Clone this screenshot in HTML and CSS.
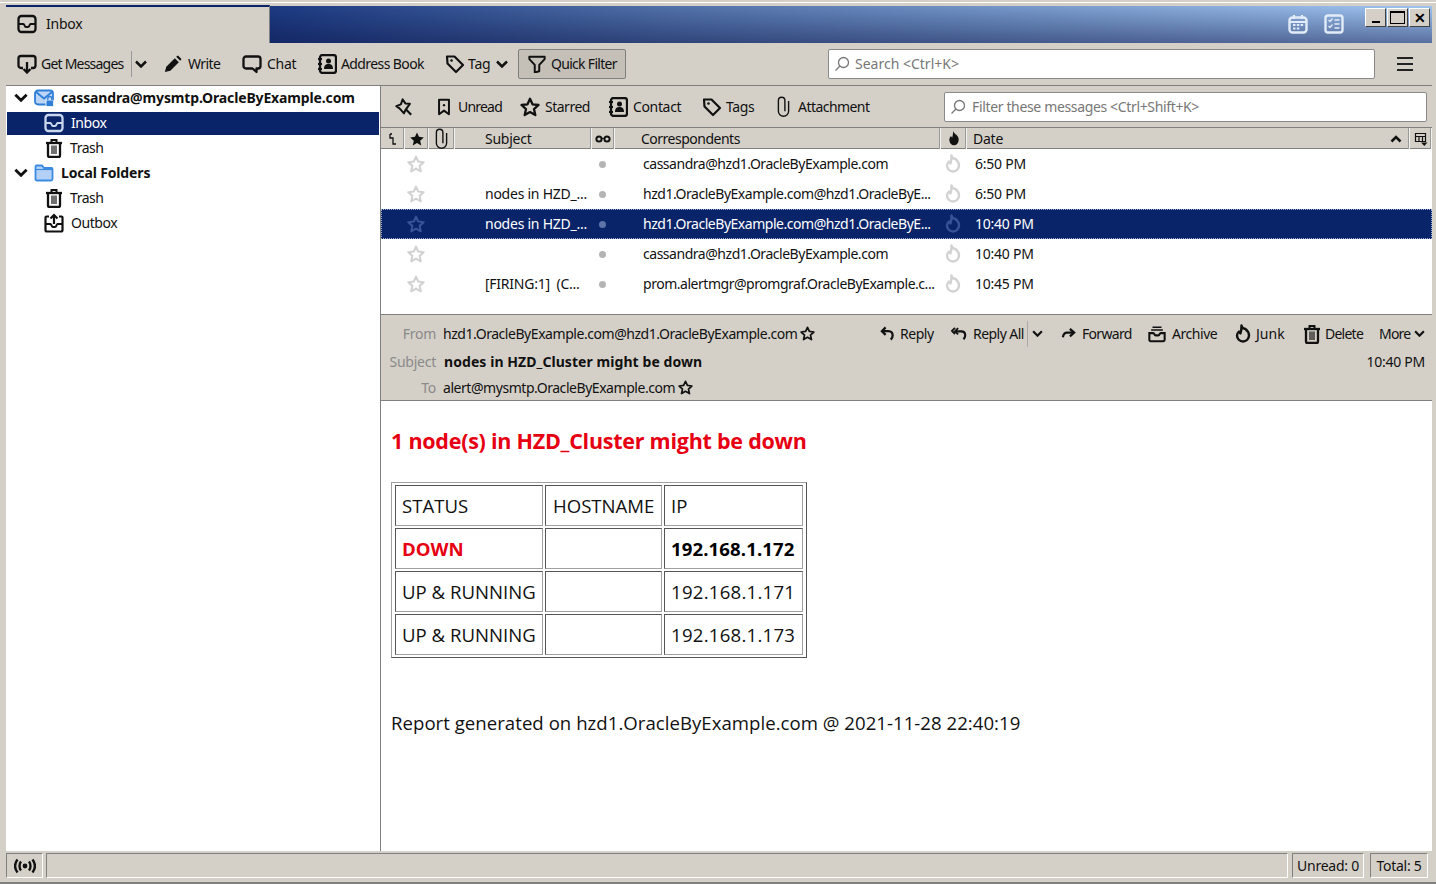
FILE: index.html
```html
<!DOCTYPE html>
<html lang="en">
<head>
<meta charset="utf-8">
<title>Inbox</title>
<link rel="stylesheet" href="styles.css">
</head>
<body>
<svg class="sprite" width="0" height="0" aria-hidden="true">
  <defs>
    <symbol id="i-inbox" viewBox="0 0 20 20"><rect x="1.500" y="2" width="17" height="16" rx="3" fill="none" stroke="currentColor" stroke-width="2.300"/><path d="M2 10h4.500c1 0 1 3 2.500 3h2c1.500 0 1.500-3 2.500-3H18" fill="none" stroke="currentColor" stroke-width="2"/></symbol>
    <symbol id="i-getmsg" viewBox="0 0 20 20"><path d="M6 14H4a2.500 2.500 0 0 1-2.500-2.500v-7A2.500 2.500 0 0 1 4 2h12a2.500 2.500 0 0 1 2.500 2.500v7A2.500 2.500 0 0 1 16 14h-2" fill="none" stroke="currentColor" stroke-width="2.300"/><path d="M10 8v10M6.500 15l3.500 3.500 3.500-3.500" fill="none" stroke="currentColor" stroke-width="2.300"/></symbol>
    <symbol id="i-chev" viewBox="0 0 12 8"><path d="M1 1.500l5 5 5-5" fill="none" stroke="currentColor" stroke-width="2.500"/></symbol>
    <symbol id="i-chevup" viewBox="0 0 12 8"><path d="M1.500 6.500L6 2l4.500 4.500" fill="none" stroke="currentColor" stroke-width="2.500"/></symbol>
    <symbol id="i-pencil" viewBox="0 0 20 20"><path d="M1 19l1.500-6L12 3.500 16.500 8 7 17.500zM13.500 2l2-1.500L19.500 4.500 18 6.500z" fill="currentColor"/></symbol>
    <symbol id="i-chat" viewBox="0 0 20 20"><path d="M4 2.500h12A2.500 2.500 0 0 1 18.500 5v7a2.500 2.500 0 0 1-2.500 2.500h-1.500V18l-4-3.500H4A2.500 2.500 0 0 1 1.500 12V5A2.500 2.500 0 0 1 4 2.500z" fill="none" stroke="currentColor" stroke-width="2.300" stroke-linejoin="round"/></symbol>
    <symbol id="i-book" viewBox="0 0 20 20"><rect x="3" y="1" width="16" height="18" rx="2.500" fill="none" stroke="currentColor" stroke-width="2.300"/><path d="M1 5h4M1 10h4M1 15h4" stroke="currentColor" stroke-width="2"/><circle cx="11.500" cy="7" r="2.500" fill="currentColor"/><path d="M7 15c0-4 2-5 4.500-5s4.500 1 4.500 5z" fill="currentColor"/></symbol>
    <symbol id="i-tag" viewBox="0 0 20 20"><path d="M2 2.500h7.500L18 11l-7 7-8.500-8.500z" fill="none" stroke="currentColor" stroke-width="2.200" stroke-linejoin="round"/><circle cx="6.500" cy="6.500" r="1.300" fill="currentColor"/></symbol>
    <symbol id="i-funnel" viewBox="0 0 20 20"><path d="M1.500 2h17v2.500L12.500 11v7l-5 1.500V11L1.500 4.500z" fill="none" stroke="currentColor" stroke-width="2.200" stroke-linejoin="round"/></symbol>
    <symbol id="i-search" viewBox="0 0 16 16"><circle cx="9.500" cy="6.500" r="5" fill="none" stroke="currentColor" stroke-width="1.300"/><path d="M6 10l-4.500 4.500" stroke="currentColor" stroke-width="1.300"/></symbol>
    <symbol id="i-calendar" viewBox="0 0 20 20"><rect x="1.500" y="3.500" width="17" height="15" rx="3" fill="none" stroke="currentColor" stroke-width="2.400"/><path d="M6 1v4M14 1v4M2 8h16" stroke="currentColor" stroke-width="2.200"/><path d="M5 10h2.500v2H5zM8.800 10h2.500v2H8.800zM12.600 10h2.500v2h-2.500zM5 13.500h2.500v2H5zM8.800 13.500h2.500v2H8.800z" fill="currentColor"/></symbol>
    <symbol id="i-tasks" viewBox="0 0 20 20"><rect x="1.500" y="1.500" width="17" height="17" rx="2.500" fill="none" stroke="currentColor" stroke-width="2.400"/><path d="M4.500 6l1.500 1.500L8.500 4.500M4.500 12l1.500 1.500L8.500 10.500" fill="none" stroke="currentColor" stroke-width="1.300"/><path d="M10.500 6h5M10.500 10h5M10.500 14h5" stroke="currentColor" stroke-width="1.300"/></symbol>
    <symbol id="i-pin" viewBox="0 0 20 20"><path d="M8.500 1.500l3 4.500 5 .5-5 7-1.500 3.500L5 11.500 1.500 9l5-2z" fill="none" stroke="currentColor" stroke-width="2.200" stroke-linejoin="round"/><path d="M12 12.500l6 6" stroke="currentColor" stroke-width="2.400"/></symbol>
    <symbol id="i-bookmark" viewBox="0 0 16 20"><path d="M2.500 2h11v16L8 14l-5.500 4z" fill="none" stroke="currentColor" stroke-width="2.200" stroke-linejoin="round"/><circle cx="8" cy="8" r="1.300" fill="currentColor"/></symbol>
    <symbol id="i-star" viewBox="0 0 20 20"><path d="M10 1.800l2.500 5.500 6 .7-4.500 4.100 1.300 6L10 15.100l-5.300 3 1.300-6L1.500 8l6-.7z" fill="none" stroke="currentColor" stroke-width="2.300" stroke-linejoin="round"/></symbol>
    <symbol id="i-starfill" viewBox="0 0 20 20"><path d="M10 1.800l2.500 5.500 6 .7-4.500 4.100 1.300 6L10 15.100l-5.300 3 1.300-6L1.500 8l6-.7z" fill="currentColor"/></symbol>
    <symbol id="i-clip" viewBox="0 0 14 22"><path d="M12.500 5v11a5.500 5.500 0 0 1-11 0V4.500a3.500 3.500 0 0 1 7 0V16" fill="none" stroke="currentColor" stroke-width="1.500"/></symbol>
    <symbol id="i-thread" viewBox="0 0 10 12"><path d="M2 1v4h3v6h3M2 1l2 0" fill="none" stroke="currentColor" stroke-width="1.300"/></symbol>
    <symbol id="i-glasses" viewBox="0 0 16 8"><circle cx="4" cy="4" r="2.600" fill="none" stroke="currentColor" stroke-width="2"/><circle cx="12" cy="4" r="2.600" fill="none" stroke="currentColor" stroke-width="2"/><path d="M6 3.500h4" stroke="currentColor"/></symbol>
    <symbol id="i-flame" viewBox="0 0 16 20"><path d="M6.500 1.500c1 3.500 2.500 3 4 3.500 2.500 2 3.500 4 3.500 6.500a6 6 0 0 1-12 0C2 9.500 3 8.500 4 7.500c.5 1 1 1.500 1.500 2 .8-2.500 1-5 1-8z" fill="none" stroke="currentColor" stroke-width="2.400" stroke-linejoin="round"/></symbol>
    <symbol id="i-flamefill" viewBox="0 0 16 20"><path d="M7 1c.5 3 2.500 3.500 4 5 1.500 1.500 2.500 3 2.500 5.500a5.500 6.500 0 0 1-11 0C2.500 9.500 3.500 8 4.500 7c.5 1 .8 1.500 1.300 2C6.500 7 7 4 7 1z" fill="currentColor"/></symbol>
    <symbol id="i-picker" viewBox="0 0 14 14"><path d="M1.500 1.500h10v8h-10zM1.500 4.500h10M5 4.500v5M8.500 4.500v5" fill="none" stroke="currentColor" stroke-width="1.200"/><path d="M7 10.500h6.500L10.300 14z" fill="currentColor"/></symbol>
    <symbol id="i-maillock" viewBox="0 0 20 20"><rect x="1" y="2.500" width="18" height="14" rx="3" fill="#bcd4f5" stroke="#2f7fd8" stroke-width="1.800"/><path d="M2 4l8 6.500L18 4" fill="none" stroke="#2f7fd8" stroke-width="1.800"/><rect x="12" y="12" width="7.500" height="6.500" rx="1" fill="#2f7fd8" stroke="#fff" stroke-width=".8"/><path d="M13.800 12v-1.500a2 2 0 0 1 4 0V12" fill="none" stroke="#2f7fd8" stroke-width="1.300"/></symbol>
    <symbol id="i-folder" viewBox="0 0 20 20"><path d="M1.500 16V3.500A1 1 0 0 1 2.500 2.500H8l2 2.500h7.500a1 1 0 0 1 1 1V16a1.500 1.500 0 0 1-1.500 1.500H3A1.500 1.500 0 0 1 1.500 16z" fill="#b5d0f7" stroke="#3a8be0" stroke-width="1.800"/><path d="M2 6.500h16" stroke="#3a8be0" stroke-width="1.200"/></symbol>
    <symbol id="i-trash" viewBox="0 0 18 20"><path d="M1 5h16" stroke="currentColor" stroke-width="2.300"/><path d="M6.500 5V2h5V5" fill="none" stroke="currentColor" stroke-width="2"/><path d="M3 5v12.500A1.500 1.500 0 0 0 4.500 19h9a1.500 1.500 0 0 0 1.500-1.500V5" fill="none" stroke="currentColor" stroke-width="2.300"/><path d="M7 7.500v8.500M9 7.500v8.500M11 7.500v8.500" stroke="currentColor" stroke-width="1.200"/></symbol>
    <symbol id="i-outbox" viewBox="0 0 20 20"><path d="M5 3.500H2.500a1 1 0 0 0-1 1V17a1.500 1.500 0 0 0 1.500 1.500h14a1.500 1.500 0 0 0 1.500-1.500V4.500a1 1 0 0 0-1-1H15" fill="none" stroke="currentColor" stroke-width="2.200"/><path d="M2 11h4.500c1 0 1 3 2.500 3h2c1.500 0 1.500-3 2.500-3H18" fill="none" stroke="currentColor" stroke-width="2"/><path d="M10 11V2M6.500 5.500L10 2l3.500 3.500" fill="none" stroke="currentColor" stroke-width="2.200"/></symbol>
    <symbol id="i-reply" viewBox="0 0 16 16"><path d="M6 1.500L2 5.500l4 4" fill="none" stroke="currentColor" stroke-width="2.400"/><path d="M2.500 5.500H9c3 0 4.500 2 4.500 4.500s-1 3.500-2 4.500" fill="none" stroke="currentColor" stroke-width="2.400"/></symbol>
    <symbol id="i-replyall" viewBox="0 0 18 16"><path d="M4.500 1L1 4.500 4.500 8M8 1.500L4.500 5 8 8.500" fill="none" stroke="currentColor" stroke-width="2"/><path d="M5 5h6.500c3 0 4.500 2 4.500 4.500s-1 3.500-2 4.500" fill="none" stroke="currentColor" stroke-width="2.400"/></symbol>
    <symbol id="i-forward" viewBox="0 0 16 12"><path d="M9.500 1l4.500 4-4.500 4" fill="none" stroke="currentColor" stroke-width="2.400"/><path d="M13.500 5H6.500c-2.500 0-4 1.500-4.500 5" fill="none" stroke="currentColor" stroke-width="2.400"/></symbol>
    <symbol id="i-archive" viewBox="0 0 20 20"><path d="M5 2.500h10M3.500 5.500h13" stroke="currentColor" stroke-width="1.600"/><path d="M1.500 9h4.500c1 0 1 2.500 2.500 2.500h3c1.500 0 1.500-2.500 2.500-2.500h4.500v7.500a1.500 1.500 0 0 1-1.500 1.500H3a1.500 1.500 0 0 1-1.500-1.500z" fill="none" stroke="currentColor" stroke-width="2.300"/></symbol>
    <symbol id="i-radio" viewBox="0 0 22 16"><circle cx="11" cy="8" r="2.400" fill="currentColor"/><path d="M7 3.500c-2 2.500-2 6.500 0 9M15 3.500c2 2.500 2 6.500 0 9M3.500 1.500c-3 4-3 9 0 13M18.500 1.500c3 4 3 9 0 13" fill="none" stroke="currentColor" stroke-width="2.400"/></symbol>
  </defs>
</svg>

<div class="window">
  <header class="titlebar">
    <div class="tab"><svg class="ic ic-20"><use href="#i-inbox"/></svg><span>Inbox</span></div>
    <div class="title-tools">
      <svg class="ic ic-20"><use href="#i-calendar"/></svg>
      <svg class="ic ic-20"><use href="#i-tasks"/></svg>
    </div>
    <div class="wincontrols">
      <button class="winbtn"><span class="glyph-min"></span></button>
      <button class="winbtn"><span class="glyph-max"></span></button>
      <button class="winbtn winbtn-close"><span class="glyph-close">✕</span></button>
    </div>
  </header>

  <nav class="toolbar">
    <div class="tb w-getmsg"><svg class="ic ic-20"><use href="#i-getmsg"/></svg><span>Get Messages</span></div>
    <div class="tb w-drop"><svg class="ic chev"><use href="#i-chev"/></svg></div>
    <div class="tb w-write"><svg class="ic ic-18"><use href="#i-pencil"/></svg><span>Write</span></div>
    <div class="tb w-chat"><svg class="ic ic-20"><use href="#i-chat"/></svg><span>Chat</span></div>
    <div class="tb w-book"><svg class="ic ic-20"><use href="#i-book"/></svg><span>Address Book</span></div>
    <div class="tb w-tag"><svg class="ic ic-20"><use href="#i-tag"/></svg><span>Tag</span><svg class="ic chev tag-chev"><use href="#i-chev"/></svg></div>
    <div class="tb w-quick"><svg class="ic ic-18"><use href="#i-funnel"/></svg><span>Quick Filter</span></div>
    <div class="searchbox w-search"><svg class="ic ic-16"><use href="#i-search"/></svg><span>Search &lt;Ctrl+K&gt;</span></div>
    <div class="hamburger"><i></i><i></i><i></i></div>
  </nav>

  <main class="panes">
    <aside class="folders">
      <div class="folder account"><svg class="ic chev chev-lg"><use href="#i-chev"/></svg><svg class="ic ic-20"><use href="#i-maillock"/></svg><span>cassandra@mysmtp.OracleByExample.com</span></div>
      <div class="folder child selected"><svg class="ic ic-20"><use href="#i-inbox"/></svg><span>Inbox</span></div>
      <div class="folder child"><svg class="ic ic-trash"><use href="#i-trash"/></svg><span>Trash</span></div>
      <div class="folder account"><svg class="ic chev chev-lg"><use href="#i-chev"/></svg><svg class="ic ic-20"><use href="#i-folder"/></svg><span>Local Folders</span></div>
      <div class="folder child"><svg class="ic ic-trash"><use href="#i-trash"/></svg><span>Trash</span></div>
      <div class="folder child"><svg class="ic ic-20"><use href="#i-outbox"/></svg><span>Outbox</span></div>
    </aside>

    <section class="content">
      <div class="filterbar">
        <div class="fb w-pin"><svg class="ic ic-18"><use href="#i-pin"/></svg></div>
        <div class="fb w-unread"><svg class="ic ic-16b"><use href="#i-bookmark"/></svg><span>Unread</span></div>
        <div class="fb w-starred"><svg class="ic ic-20"><use href="#i-star"/></svg><span>Starred</span></div>
        <div class="fb w-contact"><svg class="ic ic-20"><use href="#i-book"/></svg><span>Contact</span></div>
        <div class="fb w-tags"><svg class="ic ic-20"><use href="#i-tag"/></svg><span>Tags</span></div>
        <div class="fb w-attach"><svg class="ic ic-clip"><use href="#i-clip"/></svg><span>Attachment</span></div>
        <div class="searchbox w-filter"><svg class="ic ic-16"><use href="#i-search"/></svg><span>Filter these messages &lt;Ctrl+Shift+K&gt;</span></div>
      </div>

      <div class="thead cols">
        <div class="th"><svg class="ic ic-thread"><use href="#i-thread"/></svg></div>
        <div class="th"><svg class="ic ic-16"><use href="#i-starfill"/></svg></div>
        <div class="th"><svg class="ic ic-clip"><use href="#i-clip"/></svg></div>
        <div class="th th-text th-subject">Subject</div>
        <div class="th"><svg class="ic ic-glasses"><use href="#i-glasses"/></svg></div>
        <div class="th th-text th-corr">Correspondents</div>
        <div class="th"><svg class="ic ic-flamehead"><use href="#i-flamefill"/></svg></div>
        <div class="th th-text th-date"><span>Date</span><svg class="ic chev"><use href="#i-chevup"/></svg></div>
        <div class="th"><svg class="ic ic-14"><use href="#i-picker"/></svg></div>
      </div>

      <div class="threads">
        <div class="row cols">
          <div></div><div class="cell-c"><svg class="ic ic-18 mute"><use href="#i-star"/></svg></div><div></div>
          <div class="subj"></div><div class="cell-c"><i class="dot"></i></div>
          <div class="corr">cassandra@hzd1.OracleByExample.com</div>
          <div class="cell-c"><svg class="ic ic-flame mute"><use href="#i-flame"/></svg></div><div class="date">6:50 PM</div><div></div>
        </div>
        <div class="row cols">
          <div></div><div class="cell-c"><svg class="ic ic-18 mute"><use href="#i-star"/></svg></div><div></div>
          <div class="subj">nodes in HZD_...</div><div class="cell-c"><i class="dot"></i></div>
          <div class="corr">hzd1.OracleByExample.com@hzd1.OracleByE...</div>
          <div class="cell-c"><svg class="ic ic-flame mute"><use href="#i-flame"/></svg></div><div class="date">6:50 PM</div><div></div>
        </div>
        <div class="row cols row-selected">
          <div></div><div class="cell-c"><svg class="ic ic-18 mute"><use href="#i-star"/></svg></div><div></div>
          <div class="subj">nodes in HZD_...</div><div class="cell-c"><i class="dot"></i></div>
          <div class="corr">hzd1.OracleByExample.com@hzd1.OracleByE...</div>
          <div class="cell-c"><svg class="ic ic-flame mute"><use href="#i-flame"/></svg></div><div class="date">10:40 PM</div><div></div>
        </div>
        <div class="row cols">
          <div></div><div class="cell-c"><svg class="ic ic-18 mute"><use href="#i-star"/></svg></div><div></div>
          <div class="subj"></div><div class="cell-c"><i class="dot"></i></div>
          <div class="corr">cassandra@hzd1.OracleByExample.com</div>
          <div class="cell-c"><svg class="ic ic-flame mute"><use href="#i-flame"/></svg></div><div class="date">10:40 PM</div><div></div>
        </div>
        <div class="row cols">
          <div></div><div class="cell-c"><svg class="ic ic-18 mute"><use href="#i-star"/></svg></div><div></div>
          <div class="subj">[FIRING:1] &nbsp;(C...</div><div class="cell-c"><i class="dot"></i></div>
          <div class="corr">prom.alertmgr@promgraf.OracleByExample.c...</div>
          <div class="cell-c"><svg class="ic ic-flame mute"><use href="#i-flame"/></svg></div><div class="date">10:45 PM</div><div></div>
        </div>
      </div>

      <div class="msghead">
        <div class="hrow hrow-from">
          <span class="hlabel">From</span>
          <span class="hval">hzd1.OracleByExample.com@hzd1.OracleByExample.com</span>
          <svg class="ic ic-15"><use href="#i-star"/></svg>
          <div class="actions">
            <div class="act w-reply"><svg class="ic ic-15"><use href="#i-reply"/></svg><span>Reply</span></div>
            <div class="act w-replyall"><svg class="ic ic-16"><use href="#i-replyall"/></svg><span>Reply All</span></div>
            <div class="act w-adrop"><svg class="ic chev chev-sm"><use href="#i-chev"/></svg></div>
            <div class="act w-forward"><svg class="ic ic-15"><use href="#i-forward"/></svg><span>Forward</span></div>
            <div class="act w-archive"><svg class="ic ic-18"><use href="#i-archive"/></svg><span>Archive</span></div>
            <div class="act w-junk"><svg class="ic ic-flame"><use href="#i-flame"/></svg><span>Junk</span></div>
            <div class="act w-delete"><svg class="ic ic-trash"><use href="#i-trash"/></svg><span>Delete</span></div>
            <div class="act w-more"><span>More</span><svg class="ic chev chev-sm"><use href="#i-chev"/></svg></div>
          </div>
        </div>
        <div class="hrow hrow-subject">
          <span class="hlabel">Subject</span>
          <strong class="hval hsubject">nodes in HZD_Cluster might be down</strong>
          <span class="htime">10:40 PM</span>
        </div>
        <div class="hrow hrow-to">
          <span class="hlabel">To</span>
          <span class="hval">alert@mysmtp.OracleByExample.com</span>
          <svg class="ic ic-15"><use href="#i-star"/></svg>
        </div>
      </div>

      <article class="body">
        <h1>1 node(s) in HZD_Cluster might be down</h1>
        <table class="report">
          <colgroup><col class="c1"><col class="c2"><col class="c3"></colgroup>
          <tr><td>STATUS</td><td class="host">HOSTNAME</td><td>IP</td></tr>
          <tr><td class="down">DOWN</td><td></td><td class="ip strong">192.168.1.172</td></tr>
          <tr><td>UP &amp; RUNNING</td><td></td><td class="ip">192.168.1.171</td></tr>
          <tr><td>UP &amp; RUNNING</td><td></td><td class="ip">192.168.1.173</td></tr>
        </table>
        <p class="generated">Report generated on hzd1.OracleByExample.com @ 2021-11-28 22:40:19</p>
      </article>
    </section>
  </main>

  <footer class="statusbar">
    <div class="sb sb-online"><svg class="ic ic-radio"><use href="#i-radio"/></svg></div>
    <div class="sb sb-grow"></div>
    <div class="sb sb-unread">Unread: 0</div>
    <div class="sb sb-total">Total: 5</div>
  </footer>
</div>
</body>
</html>
```

FILE: styles.css
```css
* { box-sizing: border-box; }
html, body { margin: 0; padding: 0; height: 100%; }
body {
  width: 1436px; height: 884px; overflow: hidden;
  background: #d4d0c8; color: #111;
  font-family: "Noto Sans", "DejaVu Sans", sans-serif;
  font-size: 14px; letter-spacing: -0.25px;
}
.sprite { position: absolute; }
.window {
  height: 884px; display: flex; flex-direction: column;
  padding: 4px 4px 0 6px;
  box-shadow: inset 0 1px 0 #fff, inset 0 -2px 0 #808080;
  border-top: 2px solid #d4d0c8;
}
.ic { display: block; flex: none; overflow: visible; }
.ic-20 { width: 20px; height: 20px; }
.ic-18 { width: 18px; height: 18px; }
.ic-16 { width: 16px; height: 16px; }
.ic-15 { width: 15px; height: 15px; }
.ic-14 { width: 14px; height: 14px; }
.ic-16b { width: 16px; height: 18px; }
.ic-clip { width: 13px; height: 21px; }
.ic-thread { width: 10px; height: 12px; }
.ic-glasses { width: 16px; height: 8px; }
.ic-flame { width: 16px; height: 20px; }
.ic-flamehead { width: 14px; height: 17px; }
.ic-radio { width: 22px; height: 16px; }
.ic-trash { width: 18px; height: 20px; }
.chev { width: 12px; height: 8px; }
.chev-lg { width: 14px; height: 9px; }

/* title bar */
.titlebar {
  height: 37px; flex: none; display: flex; align-items: flex-start;
  background:
    linear-gradient(180deg, rgba(10, 20, 70, 0) 0%, rgba(10, 20, 70, .48) 100%),
    linear-gradient(90deg, #1c3a82 18.5%, #5070a8 46%, #8aaddc 84%, #a0c4f0 100%);
}
.tab {
  width: 264px; height: 38px; margin-top: -1px; display: flex; align-items: center; gap: 9px;
  padding: 0 0 3px 11px; background: #d4d0c8; border-top: 2px solid #0a246a;
  border-right: 1px solid #808080;
}
.title-tools { margin-left: auto; display: flex; gap: 16px; padding-top: 8px; color: #e2ecf8; }
.wincontrols { display: flex; margin-left: 21px; margin-right: 2px; padding-top: 2px; gap: 1px; }
.winbtn {
  width: 21px; height: 19px; padding: 0; background: #d4d0c8; display: flex; align-items: center; justify-content: center;
  border: 1px solid; border-color: #fff #404040 #404040 #fff;
  overflow: hidden; color: #000;
}
.glyph-min { width: 8px; height: 2px; background: #000; margin-top: 9px; }
.glyph-max { width: 15px; height: 13px; border: 1px solid #000; border-top-width: 2px; }
.glyph-close { font-size: 14px; line-height: 14px; font-weight: 700; letter-spacing: 0; }

/* main toolbar */
.toolbar { height: 43px; flex: none; display: flex; align-items: center; padding: 0 0 1px 11px; border-bottom: 1px solid #808080; letter-spacing: -0.45px; }
.tb { display: flex; align-items: center; gap: 4px; height: 30px; white-space: nowrap; }
.w-getmsg { width: 115px; height: 26px; border-right: 1px solid #999; letter-spacing: -0.78px; }
.w-drop { width: 32px; padding-left: 3px; }
.w-write { width: 78px; gap: 6px; letter-spacing: -0.6px; }
.w-chat { width: 75px; gap: 5px; letter-spacing: -0.25px; }
.w-book { width: 128px; gap: 4px; letter-spacing: -0.6px; }
.w-tag { width: 73px; gap: 3px; letter-spacing: -0.25px; }
.tag-chev { margin-left: 3px; }
.w-quick { width: 108px; padding-left: 9px; gap: 5px; background: #c4c0b8; border: 1px solid #808080; border-radius: 2px; letter-spacing: -0.7px; }
.searchbox {
  display: flex; align-items: center; gap: 6px; height: 30px; background: #fff; color: #777;
  border: 1px solid #8a8a8a; border-radius: 2px; padding-left: 5px; white-space: nowrap;
}
.w-search { width: 547px; margin-left: 202px; letter-spacing: 0; gap: 5px; }
.hamburger { margin-left: 22px; width: 16px; display: flex; flex-direction: column; gap: 4px; }
.hamburger i { display: block; height: 2px; background: #222; }

/* panes */
.panes { flex: 1; min-height: 0; display: flex; }
.folders { width: 375px; flex: none; background: #fff; border-right: 1px solid #808080; letter-spacing: -0.45px; }
.folder { height: 25px; display: flex; align-items: center; white-space: nowrap; padding-bottom: 2px; }
.account { font-weight: 700; padding-left: 8px; gap: 6px; letter-spacing: -0.14px; }
.account span { margin-left: 1px; }
.child { padding-left: 38px; gap: 7px; }
.child .ic-trash { margin-left: 1px; }
.folder.selected { background: #0a246a; color: #fff; height: 23px; margin: 1px; padding-left: 37px; padding-bottom: 2px; }
.selected .ic { color: #c9d6ee; }
.content { flex: 1; min-width: 0; display: flex; flex-direction: column; }

/* quick filter bar */
.filterbar { height: 41px; flex: none; display: flex; align-items: center; padding-left: 14px; letter-spacing: -0.35px; }
.fb { display: flex; align-items: center; gap: 6px; white-space: nowrap; }
.w-pin { width: 41px; }
.w-unread { width: 84px; letter-spacing: -0.8px; }
.w-starred { width: 88px; gap: 5px; letter-spacing: -0.5px; }
.w-contact { width: 94px; gap: 5px; }
.w-tags { width: 75px; gap: 4px; }
.w-attach { width: 167px; gap: 8px; letter-spacing: -0.55px; }
.w-filter { width: 483px; height: 30px; }

/* thread pane */
.cols { display: grid; grid-template-columns: 24px 24px 26px 137px 23px 326px 26px 443px 22px; }
.thead { height: 22px; flex: none; background: #d4d0c8; border-top: 1px solid #808080; border-bottom: 1px solid #808080; }
.th { display: flex; align-items: center; justify-content: center; border-right: 1px solid #f4f2ee; box-shadow: inset -1px 0 0 #9a9a9a; }
.th-text { justify-content: flex-start; }
.th-subject { padding-left: 30px; }
.th-corr { padding-left: 26px; letter-spacing: -0.5px; }
.th-date { padding: 0 7px 0 6px; justify-content: space-between; }
.threads { height: 165px; flex: none; background: #fff; }
.row { height: 30px; align-items: center; white-space: nowrap; }
.row-selected { background: #0a246a; color: #fff; outline: 1px dotted #9fb0d6; outline-offset: -1px; }
.cell-c { display: flex; align-items: center; justify-content: center; padding-right: 2px; }
.mute { color: #d2d2d2; }
.row-selected .mute { color: #3a5296; }
.dot { width: 7px; height: 7px; border-radius: 50%; background: #b4b4b4; display: block; }
.row-selected .dot { background: #5f74a8; }
.subj { padding: 0 0 2px 30px; overflow: hidden; }
.corr { padding: 0 0 2px 28px; overflow: hidden; letter-spacing: -0.47px; }
.date { padding: 0 0 2px 8px; }

/* message header */
.msghead { height: 87px; flex: none; border-top: 1px solid #808080; border-bottom: 1px solid #808080; padding-left: 8px; display: flex; flex-direction: column; }
.hrow { display: flex; align-items: center; gap: 7px; }
.hrow-from { height: 37px; }
.hrow-subject { height: 18px; }
.hrow-to { height: 30px; padding-top: 5px; }
.hlabel { width: 47px; text-align: right; color: #8a8a8a; flex: none; }
.hval { white-space: nowrap; letter-spacing: -0.45px; }
.hsubject { font-weight: 700; letter-spacing: 0.07px; margin-left: 1px; }
.hval + .ic { margin-left: -4px; }
.actions { margin-left: auto; display: flex; align-items: center; height: 26px; padding-right: 7px; letter-spacing: -0.45px; }
.act { display: flex; align-items: center; gap: 6px; white-space: nowrap; }
.w-reply { width: 71px; gap: 5px; }
.w-replyall { width: 77px; border-right: 1px solid #aaa; height: 26px; letter-spacing: -0.55px; }
.w-adrop { width: 33px; padding-left: 4px; }
.w-forward { width: 87px; letter-spacing: -0.7px; }
.w-archive { width: 87px; gap: 6px; }
.w-junk { width: 68px; gap: 5px; letter-spacing: 0; }
.w-delete { width: 76px; gap: 4px; letter-spacing: -0.75px; }
.w-more { width: 46px; gap: 4px; letter-spacing: -0.8px; }
.chev-sm { width: 11px; height: 7px; }
.htime { margin-left: auto; padding-right: 7px; }

/* message body */
.body { flex: 1; min-height: 0; background: #fff; padding: 0 10px; font-family: "Open Sans", "Noto Sans", sans-serif; letter-spacing: 0; color: #111; font-size: 18.6px; }
.body h1 { margin: 24px 0 0; font-size: 21.5px; line-height: 32px; font-weight: 700; color: #e60012; letter-spacing: -0.25px; }
.report { margin-top: 25px; border-collapse: separate; border-spacing: 2px; width: 416px; table-layout: fixed; border: 1px solid; border-color: #a0a0a0 #555 #555 #a0a0a0; padding: 0 1px; }
.c1 { width: 148px; } .c2 { width: 117px; } .c3 { width: 139px; }
.report td { height: 41px; padding: 0 6px; border: 1px solid; border-color: #555 #a0a0a0 #a0a0a0 #555; white-space: nowrap; line-height: 24px; }
.report td.host { padding-left: 7px; }
.report td.ip { letter-spacing: 0.25px; }
.down { color: #e60012; font-weight: 700; }
.report td.strong { font-weight: 700; color: #000; letter-spacing: 0.1px; }
.generated { margin: 52px 0 0; line-height: 26px; letter-spacing: 0.03px; }

/* status bar */
.statusbar { height: 33px; flex: none; display: flex; gap: 3px; padding-top: 2px; }
.sb { height: 25px; display: flex; align-items: center; justify-content: center; border: 1px solid; border-color: #808080 #fff #fff #808080; }
.sb-online { width: 37px; }
.sb-grow { flex: 1; margin-right: 1px; }
.sb-unread { width: 72px; }
.sb-total { width: 58px; margin-left: 3px; margin-right: 4px; }
```
